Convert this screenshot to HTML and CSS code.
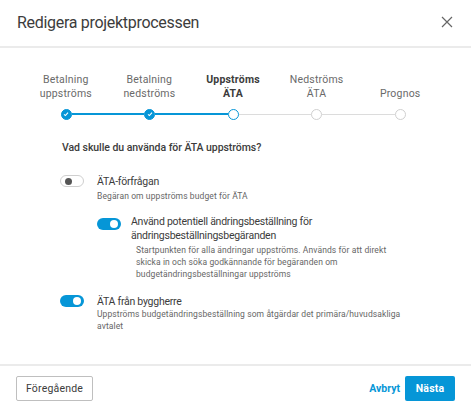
FILE: index.html
```html
<!DOCTYPE html>
<html lang="sv">
<head>
<meta charset="utf-8">
<link rel="stylesheet" href="styles.css">
</head>
<body>
<div class="dialog">
  <header class="header">
    <h1 class="title">Redigera projektprocessen</h1>
    <button class="close" aria-label="Stäng">
      <svg width="12" height="12" viewBox="0 0 12 12"><path d="M1 1L11 11M11 1L1 11" stroke="#666" stroke-width="1.2" fill="none"/></svg>
    </button>
  </header>

  <main class="content">
    <div class="stepper">
      <div class="labels">
        <div class="label">Betalning<br>uppströms</div>
        <div class="label">Betalning<br>nedströms</div>
        <div class="label current">Uppströms<br>ÄTA</div>
        <div class="label">Nedströms<br>ÄTA</div>
        <div class="label">Prognos</div>
      </div>
      <div class="track">
        <span class="dot done"><svg width="6" height="6" viewBox="0 0 6 6"><path d="M1 3.4L2.4 4.6L5 1.6" stroke="#fff" stroke-width="1.1" fill="none"/></svg></span>
        <span class="seg done"></span>
        <span class="dot done"><svg width="6" height="6" viewBox="0 0 6 6"><path d="M1 3.4L2.4 4.6L5 1.6" stroke="#fff" stroke-width="1.1" fill="none"/></svg></span>
        <span class="seg done"></span>
        <span class="dot current"></span>
        <span class="seg"></span>
        <span class="dot"></span>
        <span class="seg"></span>
        <span class="dot"></span>
      </div>
    </div>

    <p class="question">Vad skulle du använda för ÄTA uppströms?</p>

    <div class="option">
      <span class="toggle off"><span class="knob"></span></span>
      <div class="option-text">
        <div class="option-label">ÄTA-förfrågan</div>
        <div class="option-desc">Begäran om uppströms budget för ÄTA</div>
      </div>
    </div>

    <div class="option nested">
      <span class="toggle on"><span class="knob"></span></span>
      <div class="option-text">
        <div class="option-label">Använd potentiell ändringsbeställning för<br>ändringsbeställningsbegäranden</div>
        <div class="option-desc indent">Startpunkten för alla ändringar uppströms. Används för att direkt<br>skicka in och söka godkännande för begäranden om<br>budgetändringsbeställningar uppströms</div>
      </div>
    </div>

    <div class="option last">
      <span class="toggle on"><span class="knob"></span></span>
      <div class="option-text">
        <div class="option-label">ÄTA från byggherre</div>
        <div class="option-desc tight">Uppströms budgetändringsbeställning som åtgärdar det primära/huvudsakliga<br>avtalet</div>
      </div>
    </div>
  </main>

  <footer class="footer">
    <button class="btn secondary">Föregående</button>
    <div class="actions">
      <button class="link">Avbryt</button>
      <button class="btn primary">Nästa</button>
    </div>
  </footer>
</div>
</body>
</html>
```

FILE: styles.css
```css
* { box-sizing: border-box; }
html, body { margin: 0; padding: 0; background: #fff; }
body {
  font-family: Roboto, "Noto Sans", sans-serif;
  color: #3c3c3c;
  width: 471px;
  height: 411px;
  overflow: hidden;
}
.dialog { display: flex; flex-direction: column; height: 411px; }

.header {
  height: 48px;
  display: flex;
  align-items: center;
  justify-content: space-between;
  padding: 0 18px 2px 17px;
  border-bottom: 2px solid #ebebeb;
}
.title {
  margin: 0;
  font-size: 16px;
  font-weight: 400;
  letter-spacing: -0.3px;
  color: #3c3c3c;
}
.close {
  border: 0; background: none; padding: 0; width: 12px; height: 12px;
  display: flex;
}

.content { flex: 1; padding: 25px 0 0 0; }

.stepper { padding: 0 29px 0 24px; }
.labels {
  display: grid;
  grid-template-columns: repeat(5, 1fr);
  align-items: end;
}
.label {
  text-align: center;
  font-size: 10.5px;
  line-height: 14px;
  color: #6a6a6a;
  letter-spacing: 0.2px;
}
.label.current { font-weight: 700; color: #3c3c3c; }
.track {
  display: flex;
  align-items: center;
  margin: 8px 36.5px 0;
  height: 10px;
}
.dot {
  width: 11px; height: 11px;
  border-radius: 50%;
  border: 1px solid #d0d0d0;
  background: #fff;
  flex: none;
  display: flex; align-items: center; justify-content: center;
}
.dot.done { background: #0696d7; border-color: #0696d7; }
.dot.current { border: 1.5px solid #0696d7; }
.seg { flex: 1; height: 1px; background: #dcdcdc; }
.seg.done { height: 1.5px; background: #0696d7; }

.question {
  margin: 22px 0 0 62px;
  font-size: 10.5px;
  font-weight: 500;
  letter-spacing: -0.05px;
  color: #3c3c3c;
}

.option {
  display: flex;
  align-items: flex-start;
  gap: 13px;
  margin: 21px 0 0 60px;
}
.option.nested { margin: 13px 0 0 97px; gap: 10px; }
.option.last { margin-top: 15px; }
.toggle {
  width: 24px; height: 12px;
  border-radius: 6px;
  flex: none;
  display: flex; align-items: center;
  margin-top: 0;
}
.nested .toggle { margin-top: 3px; }
.toggle.off { border: 1px solid #cfcfcf; background: #fff; padding-left: 4px; }
.toggle.off .knob { width: 7px; height: 7px; border-radius: 50%; background: #555; }
.toggle.on { background: #0696d7; justify-content: flex-end; padding-right: 3px; }
.toggle.on .knob { width: 8px; height: 8px; border-radius: 50%; background: #fff; }

.option-label { font-size: 10.5px; line-height: 14px; color: #3c3c3c; letter-spacing: -0.25px; }
.option-desc { font-size: 8.5px; line-height: 12px; color: #666; margin-top: 1px; letter-spacing: 0.1px; }
.option-desc.indent { padding-left: 5px; }
.option-desc.tight { margin-top: -1px; }

.footer {
  height: 47px;
  border-top: 2px solid #ebebeb;
  display: flex;
  align-items: center;
  justify-content: space-between;
  padding: 0 16px 0 16px;
}
.btn {
  font-family: inherit;
  height: 25px;
  font-size: 10.5px;
  border-radius: 2px;
  cursor: pointer;
  letter-spacing: 0.2px;
}
.btn.secondary {
  width: 77px;
  background: #fff;
  border: 1px solid #bfbfbf;
  color: #3c3c3c;
}
.actions { display: flex; align-items: center; gap: 5px; }
.link {
  font-family: inherit;
  background: none; border: 0; padding: 0;
  color: #0696d7;
  font-weight: 700;
  font-size: 10.5px;
}
.btn.primary {
  width: 50px;
  background: #0696d7;
  border: 0;
  color: #fff;
  font-weight: 700;
}
```
